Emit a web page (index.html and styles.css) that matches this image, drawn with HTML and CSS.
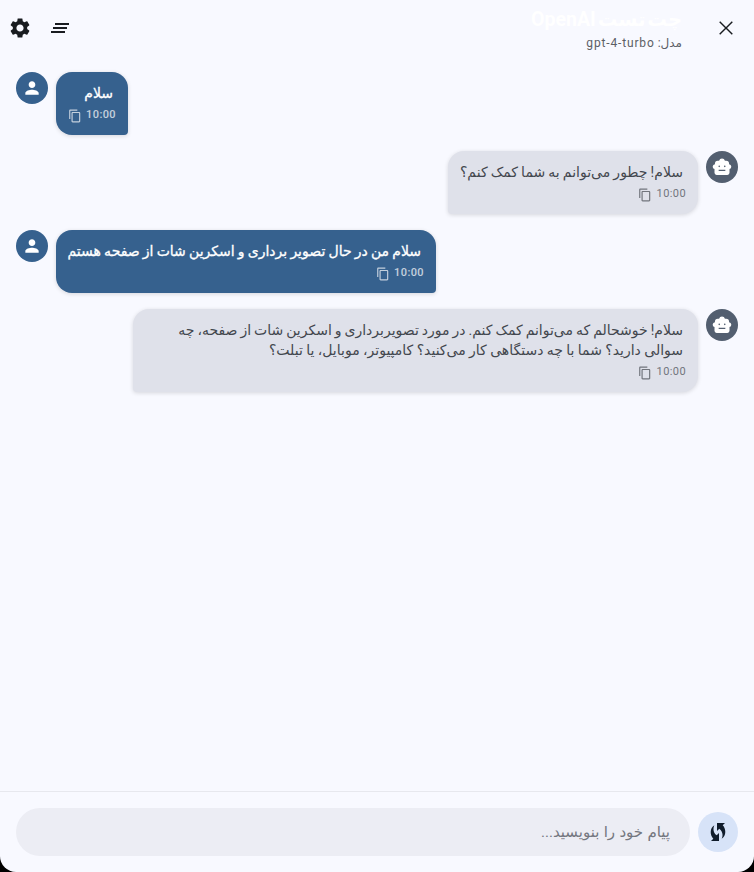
FILE: index.html
```html
<!DOCTYPE html>
<html lang="fa" dir="rtl">
<head>
<meta charset="utf-8">
<title>OpenAI</title>
<link rel="stylesheet" href="styles.css">
</head>
<body>
<svg class="defs" width="0" height="0">
  <symbol id="person" viewBox="0 0 24 24"><path d="M12 12c2.210 0 4-1.790 4-4s-1.790-4-4-4-4 1.790-4 4 1.790 4 4 4zm0 2c-2.670 0-8 1.340-8 4v2h16v-2c0-2.660-5.330-4-8-4z"/></symbol>
  <symbol id="copy" viewBox="0 0 24 24"><path d="M16 1H4c-1.100 0-2 .9-2 2v14h2V3h12V1zm3 4H8c-1.100 0-2 .9-2 2v14c0 1.100.9 2 2 2h11c1.100 0 2-.9 2-2V7c0-1.100-.9-2-2-2zm0 16H8V7h11v14z"/></symbol>
  <symbol id="bot" viewBox="0 0 24 24"><path fill-rule="evenodd" d="M8.500 4.500a3.600 3.600 0 0 1 7 0H17a3.500 3.500 0 0 1 3.500 3.500v.8a2.900 2.900 0 0 1 .5 5.700v4.500a2.500 2.500 0 0 1-2.500 2.500h-13A2.500 2.500 0 0 1 3 19v-4.500a2.900 2.900 0 0 1 .5-5.700V8A3.500 3.500 0 0 1 7 4.500zM8.700 10.200a1 1 0 1 0 0 2 1 1 0 0 0 0-2zm6.600 0a1 1 0 1 0 0 2 1 1 0 0 0 0-2zM8 15.300v1.500h8v-1.500z"/></symbol>
</svg>
<div class="app">
  <header class="header">
    <svg class="close" viewBox="0 0 24 24"><path d="M18.800 6.200 17.800 5.200 12 11 6.200 5.200 5.200 6.200 11 12 5.200 17.800 6.200 18.800 12 13 17.800 18.800 18.800 17.800 13 12z"/></svg>
    <div class="titles">
      <h1><span>چت تست OpenAI</span></h1>
      <p><span class="fa">مدل:</span> <bdi>gpt-4-turbo</bdi></p>
    </div>
    <svg class="action" viewBox="0 0 24 24"><path d="M5 13h14v-2H5v2zm-2 4h14v-2H3v2zM7 7v2h14V7H7z"/></svg>
    <svg class="action" viewBox="0 0 24 24"><path d="M19.140 12.940c.04-.3.060-.61.060-.94 0-.32-.02-.64-.07-.94l2.030-1.580c.18-.14.230-.41.120-.61l-1.920-3.320c-.12-.22-.37-.29-.59-.22l-2.390.96c-.5-.38-1.030-.7-1.620-.94l-.36-2.540c-.04-.24-.24-.41-.48-.41h-3.840c-.24 0-.43.170-.47.410l-.36 2.540c-.59.240-1.130.570-1.620.940l-2.390-.96c-.22-.08-.47 0-.59.220L2.740 8.870c-.12.210-.08.470.12.610l2.030 1.580c-.05.3-.09.630-.09.940s.02.640.07.940l-2.030 1.580c-.18.140-.23.410-.12.610l1.920 3.320c.12.220.37.290.59.220l2.390-.96c.5.380 1.030.7 1.620.940l.36 2.540c.05.240.24.410.48.410h3.840c.24 0 .44-.17.470-.41l.36-2.540c.59-.24 1.130-.56 1.620-.94l2.390.96c.22.080.47 0 .59-.22l1.920-3.320c.12-.22.070-.47-.12-.61l-2.010-1.580zM12 15.600c-1.980 0-3.600-1.620-3.600-3.600s1.620-3.600 3.600-3.600 3.600 1.620 3.600 3.600-1.620 3.600-3.600 3.600z"/></svg>
  </header>
  <main class="messages">
    <article class="message user">
      <div class="avatar"><svg viewBox="0 0 24 24"><use href="#person"/></svg></div>
      <div class="bubble w1"><p>سلام</p><div class="meta"><time>10:00</time><svg><use href="#copy"/></svg></div></div>
    </article>
    <article class="message">
      <div class="avatar"><svg viewBox="0 0 24 24"><use href="#bot"/></svg></div>
      <div class="bubble w2"><p class="t2">سلام! چطور می‌توانم به شما کمک کنم؟</p><div class="meta"><time>10:00</time><svg><use href="#copy"/></svg></div></div>
    </article>
    <article class="message user">
      <div class="avatar"><svg viewBox="0 0 24 24"><use href="#person"/></svg></div>
      <div class="bubble w3"><p class="t3">سلام من در حال تصویر برداری و اسکرین شات از صفحه هستم</p><div class="meta"><time>10:00</time><svg><use href="#copy"/></svg></div></div>
    </article>
    <article class="message">
      <div class="avatar"><svg viewBox="0 0 24 24"><use href="#bot"/></svg></div>
      <div class="bubble w4"><p class="t4">سلام! خوشحالم که می‌توانم کمک کنم. در مورد تصویربرداری و اسکرین شات از صفحه، چه</p><p class="t5">سوالی دارید؟ شما با چه دستگاهی کار می‌کنید؟ کامپیوتر، موبایل، یا تبلت؟</p><div class="meta"><time>10:00</time><svg><use href="#copy"/></svg></div></div>
    </article>
  </main>
  <footer class="composer">
    <button class="send" type="button"><svg viewBox="0 0 24 24"><path d="M16.710 5.290 19 3h-8v8l2.300-2.300c1.970 1.460 3.250 3.780 3.250 6.420 0 1.310-.32 2.550-.88 3.630C17.900 17.300 19.300 14.800 19.300 12c0-2.700-1-5.040-2.590-6.710zM7.460 8.880c0-1.310.32-2.550.88-3.630C6.100 6.700 4.700 9.200 4.700 12c0 2.700 1 5.040 2.590 6.710L5 21h8v-8l-2.300 2.300c-1.960-1.460-3.240-3.780-3.240-6.420z"/></svg></button>
    <div class="field"><span>پیام خود را بنویسید...</span></div>
  </footer>
</div>
</body>
</html>
```
FILE: styles.css
```css
* { box-sizing: border-box; }
body { margin: 0; background: #000; font-family: Roboto, "DejaVu Sans", sans-serif; }
h1, p { margin: 0; font-weight: inherit; }
.defs { display: block; }
svg { fill: currentColor; flex: none; }
.app { height: 872px; display: flex; flex-direction: column; overflow: hidden; background: #f8f9ff; border-radius: 0 0 16px 16px; color: #191c20; }
.header { height: 56px; display: flex; align-items: center; padding: 0 16px 0 8px; flex: none; }
.close { width: 24px; height: 24px; }
.titles { flex: 1; padding-right: 32px; height: 56px; white-space: nowrap; }
.titles h1 { height: 34px; line-height: 40px; font-size: 19.500px; font-weight: 700; word-spacing: -3px; color: #fff; }
.titles p { line-height: 18px; font-size: 12px; letter-spacing: .85px; color: #5c5f66; }
.titles .fa { letter-spacing: 0; }
.action { width: 24px; height: 24px; }
.action + .action { margin-right: 16px; }
.messages { flex: 1; display: flex; flex-direction: column; gap: 16px; padding: 16px; }
.message { display: flex; align-items: flex-start; gap: 8px; }
.message.user { direction: ltr; }
.avatar { width: 32px; height: 32px; border-radius: 50%; background: #535f70; color: #fff; display: flex; align-items: center; justify-content: center; flex: none; }
.avatar svg { width: 20px; height: 20px; }
.user .avatar { background: #36618e; }
.bubble { direction: rtl; height: 63px; padding: 11px 12px 0; border-radius: 16px 16px 16px 4px; background: #dfe1ea; color: #43474e; box-shadow: 0 1px 4px rgba(0, 0, 0, .14); }
.user .bubble { background: #36618e; color: #fff; border-radius: 16px 16px 4px 16px; font-weight: 500; }
.bubble p { padding-right: 3px; line-height: 20px; font-size: 14px; white-space: nowrap; }
.user .bubble p { -webkit-text-stroke: .3px #fff; }
.bubble .t2 { word-spacing: -.35px; }
.bubble .t3 { word-spacing: -.3px; }
.bubble .t4 { word-spacing: -.5px; }
.bubble .t5 { word-spacing: -.1px; }
.w1 { width: 72px; }
.w2 { width: 250px; }
.w3 { width: 380px; }
.bubble.w4 { width: 565px; height: 83px; }
.meta { display: flex; align-items: center; gap: 4.500px; height: 23px; font-size: 11px; letter-spacing: .4px; opacity: .7; }
.meta svg { width: 14px; height: 14px; margin-top: 2px; }
.composer { height: 81px; display: flex; align-items: center; gap: 8px; padding: 0 16px; border-top: 1px solid #e7e8ee; }
.send { width: 40px; height: 40px; padding: 0; border: 0; border-radius: 50%; background: #d7e3f8; color: #101c2b; display: flex; align-items: center; justify-content: center; flex: none; }
.send svg { width: 24px; height: 24px; }
.field { flex: 1; height: 48px; padding: 0 20px; border-radius: 24px; background: #ecedf4; color: #74777f; line-height: 48px; font-size: 15px; word-spacing: .6px; }
```
